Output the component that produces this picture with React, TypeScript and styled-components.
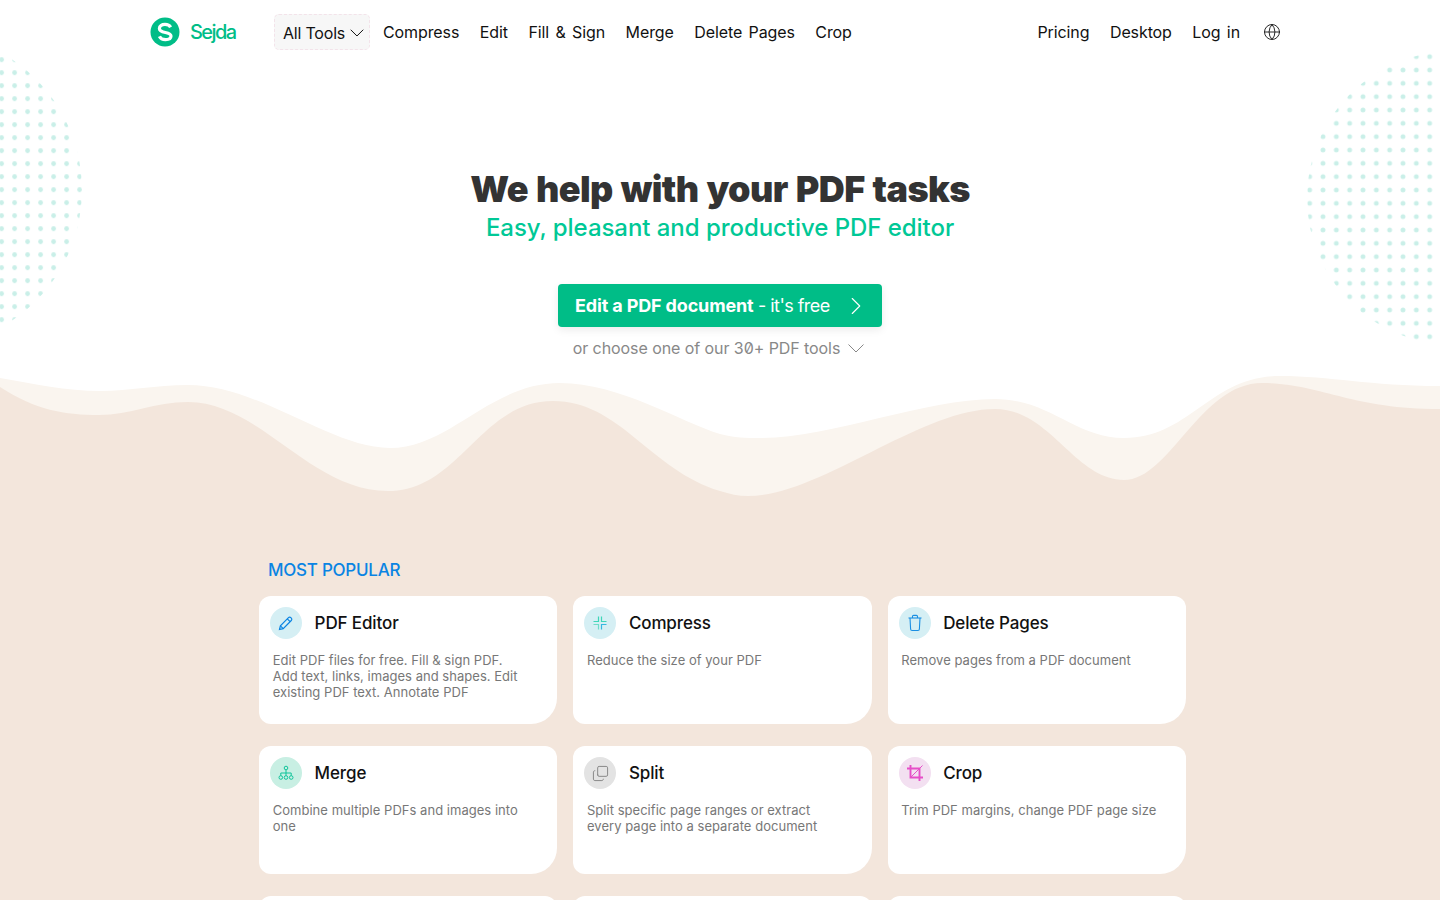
import styled, { createGlobalStyle } from "styled-components"
import { ChevronDown, ChevronRight, Copy, Globe } from "lucide-react"
import type { ReactNode } from "react"

const GlobalStyle = createGlobalStyle`
  html, body {
    margin: 0;
    padding: 0;
    background: #fff;
    overflow: hidden;
  }
  body {
    font-family: Inter, "Liberation Sans", sans-serif;
    color: #111;
  }
`

const Page = styled.div`
  position: relative;
  height: 900px;
  overflow: hidden;
`

const DotField = styled.svg`
  position: absolute;
  top: 0;
  left: 0;
  pointer-events: none;
`

const Nav = styled.nav`
  position: relative;
  display: flex;
  align-items: center;
  height: 64px;
  padding: 0 159px 0 150px;
  font-size: 16px;
  letter-spacing: -0.1px;
  word-spacing: 2px;
`

const Brand = styled.a`
  display: flex;
  align-items: center;
  gap: 10px;
  width: 124px;
  color: #00bd87;
  font-size: 20px;
  font-weight: 500;
  letter-spacing: -1.6px;
`

const NavLinks = styled.div`
  display: flex;
  align-items: center;
  gap: 20.5px;
`

const NavLink = styled.a`
  color: #111;
  white-space: nowrap;
`

const ToolsButton = styled.button`
  display: flex;
  align-items: center;
  justify-content: space-between;
  box-sizing: border-box;
  width: 96px;
  height: 36px;
  margin-right: -7.5px;
  padding: 2px 0 0 8px;
  background: #f7f7f7;
  border: 1px dashed #f3e3ea;
  border-radius: 5px;
  color: #111;
  font: inherit;
  letter-spacing: -0.2px;
  word-spacing: 0;
  white-space: nowrap;
`

const NavRight = styled(NavLinks)`
  margin-left: auto;

  svg {
    margin-left: 2.5px;
  }
`

const Hero = styled.section`
  position: relative;
  display: flex;
  flex-direction: column;
  align-items: center;
  padding: 103px 0 16px;
`

const Title = styled.h1`
  margin: 0;
  color: #333;
  font-size: 36px;
  font-weight: 900;
  line-height: 45px;
  letter-spacing: -0.6px;
  word-spacing: 1.4px;
`

const Subtitle = styled.h2`
  margin: 0;
  color: #00c896;
  font-size: 24px;
  font-weight: 500;
  line-height: 32px;
  letter-spacing: -0.05px;
`

const CallToAction = styled.a`
  display: flex;
  align-items: center;
  justify-content: space-between;
  box-sizing: border-box;
  width: 324px;
  height: 43px;
  margin-top: 40px;
  padding: 0 11px 0 17px;
  background: #00bd87;
  border-radius: 4px;
  box-shadow: 0 3px 8px rgba(0, 0, 0, 0.08);
  color: #fff;
  font-size: 18px;
  letter-spacing: -0.55px;

  strong {
    font-weight: 700;
    letter-spacing: -0.15px;
  }
`

const MoreTools = styled.a`
  display: flex;
  align-items: center;
  gap: 8px;
  margin-top: 9px;
  padding-right: 3px;
  color: #888;
  font-size: 16px;
  line-height: 24px;
  font-feature-settings: "zero";
  letter-spacing: -0.07px;
`

const Wave = styled.svg`
  display: block;
  width: 1440px;
  height: 144px;
`

const Popular = styled.section`
  height: 380px;
  padding: 40px 0 0 259px;
  background: #f3e6dc;
`

const SectionLabel = styled.h3`
  margin: 0 0 16px 9px;
  color: #0a84e3;
  font-size: 17px;
  font-weight: 500;
  line-height: 20px;
  letter-spacing: -0.25px;
`

const CardGrid = styled.div`
  display: grid;
  grid-template-columns: repeat(3, 298.3px);
  grid-auto-rows: 128px;
  column-gap: 16px;
  row-gap: 22px;
`

const Card = styled.a`
  display: block;
  box-sizing: border-box;
  padding: 11px 11px 0 11px;
  background: #fff;
  border-radius: 12px 12px 26px 12px;
`

const CardHead = styled.div`
  display: flex;
  align-items: center;
  gap: 12.6px;
`

const IconCircle = styled.span<{ $bg: string }>`
  display: flex;
  align-items: center;
  justify-content: center;
  flex: none;
  width: 32px;
  height: 32px;
  border-radius: 50%;
  background: ${(p) => p.$bg};
`

const CardTitle = styled.span`
  color: #111;
  font-size: 17px;
  font-weight: 450;
  letter-spacing: -0.12px;
`

const CardText = styled.p`
  max-width: 257px;
  margin: 13px 0 0 2.7px;
  color: #777;
  font-size: 13px;
  line-height: 16px;
  letter-spacing: 0.03px;
`

const Logo = () => (
  <svg width="30" height="30" viewBox="0 0 30 30">
    <circle cx="15" cy="15" r="14.5" fill="#00bd87" />
    <path
      d="M20.6 10.2C19.6 8.3 17.6 7.4 15 7.4c-3.3 0-5.6 1.6-5.6 4.1 0 5.6 11.6 2.4 11.6 7.6 0 2.300-2.400 3.600-5.500 3.600-3 0-5.100-1.100-6.100-3.300"
      fill="none"
      stroke="#fff"
      strokeWidth="3.2"
    />
  </svg>
)

const WideChevron = () => (
  <svg width="16" height="9" viewBox="0 0 16 9" fill="none" stroke="#888" strokeWidth="1">
    <path d="M0.500 0.500L8 8L15.500 0.500" />
  </svg>
)

const PencilIcon = () => (
  <svg width="16" height="16" viewBox="0 0 16 16" fill="none" stroke="#0a84e3" strokeWidth="1.200">
    <path d="M1.500 14.500l.9-3.700 8.100-8.100a1.600 1.600 0 0 1 2.300 0l.5.500a1.600 1.600 0 0 1 0 2.300l-8.100 8.100z" />
    <path d="M9.300 3.900l2.800 2.800M2.400 10.800l2.800 2.800" />
  </svg>
)

const CompressIcon = () => (
  <svg width="16" height="16" viewBox="0 0 16 16" fill="none" strokeWidth="1.2">
    <path d="M6.500 1.500v5h-5" stroke="#3ed6b8" />
    <path d="M9.500 1.500v5h5" stroke="#3ed6b8" />
    <path d="M6.500 14.500v-5h-5" stroke="#6fdcc8" />
    <path d="M9.500 14.500v-5h5" stroke="#35b8e0" />
  </svg>
)

const TrashIcon = () => (
  <svg width="16" height="18" viewBox="0 0 16 18" fill="none" stroke="#1a8fe3" strokeWidth="1.1">
    <path d="M1.500 4h13" />
    <path d="M5.500 4V2.500C5.500 1.800 6 1.400 6.600 1.400h2.800c.6 0 1.100.4 1.100 1.100V4" />
    <path d="M3 4l.6 11c0 .9.6 1.500 1.500 1.500h5.800c.9 0 1.500-.6 1.500-1.500L13 4" />
  </svg>
)

const MergeIcon = () => (
  <svg width="16" height="16" viewBox="0 0 16 16" fill="none" stroke="#0fc49a" strokeWidth="1">
    <circle cx="8" cy="3" r="1.800" />
    <circle cx="2.800" cy="12.500" r="1.800" />
    <circle cx="8" cy="12.500" r="1.800" />
    <circle cx="13.200" cy="12.500" r="1.800" />
    <path d="M8 4.800v5.900M2.800 10.700V8h10.400v2.700" />
  </svg>
)

const CropIcon = () => (
  <svg width="18" height="18" viewBox="0 0 18 18" fill="none" stroke="#e64fc8" strokeWidth="1.900">
    <path d="M1 4.500h12.500V17" />
    <path d="M4.500 1v12.500H17" />
    <path d="M4.500 13.500L16.500 1.500" strokeWidth="1" />
  </svg>
)

interface ToolCardProps {
  icon: ReactNode
  iconBg: string
  title: string
  text: string
}

const ToolCard = ({ icon, iconBg, title, text }: ToolCardProps) => (
  <Card>
    <CardHead>
      <IconCircle $bg={iconBg}>{icon}</IconCircle>
      <CardTitle>{title}</CardTitle>
    </CardHead>
    <CardText>{text}</CardText>
  </Card>
)

const tools: ToolCardProps[] = [
  {
    icon: <PencilIcon />,
    iconBg: "#d5eff4",
    title: "PDF Editor",
    text: "Edit PDF files for free. Fill & sign PDF. Add text, links, images and shapes. Edit existing PDF text. Annotate PDF",
  },
  { icon: <CompressIcon />, iconBg: "#d5eff4", title: "Compress", text: "Reduce the size of your PDF" },
  { icon: <TrashIcon />, iconBg: "#d5eff4", title: "Delete Pages", text: "Remove pages from a PDF document" },
  { icon: <MergeIcon />, iconBg: "#c8efe3", title: "Merge", text: "Combine multiple PDFs and images into one" },
  {
    icon: <Copy size={17} color="#888" strokeWidth={1.4} style={{ transform: "rotate(-90deg)" }} />,
    iconBg: "#e3e3e3",
    title: "Split",
    text: "Split specific page ranges or extract every page into a separate document",
  },
  { icon: <CropIcon />, iconBg: "#f3e0f1", title: "Crop", text: "Trim PDF margins, change PDF page size" },
]

const Dots = () => (
  <DotField width="1440" height="360">
    <defs>
      <pattern id="dots-left" x="-4.900" y="1.200" width="13" height="13" patternUnits="userSpaceOnUse">
        <circle cx="6.500" cy="6.500" r="2.400" fill="#c9efe8" />
      </pattern>
      <pattern id="dots-right" x="1303" y="50" width="13.333" height="13.333" patternUnits="userSpaceOnUse">
        <circle cx="6.667" cy="6.667" r="2.400" fill="#c9efe8" />
      </pattern>
    </defs>
    <circle cx="-75" cy="190" r="157" fill="url(#dots-left)" />
    <circle cx="1454" cy="198" r="147" fill="url(#dots-right)" />
  </DotField>
)

export default function App() {
  return (
    <Page>
      <GlobalStyle />
      <Dots />
      <Nav>
        <Brand>
          <Logo />
          Sejda
        </Brand>
        <NavLinks>
          <ToolsButton>
            All Tools
            <ChevronDown size={24} strokeWidth={1} />
          </ToolsButton>
          <NavLink>Compress</NavLink>
          <NavLink>Edit</NavLink>
          <NavLink>Fill &amp; Sign</NavLink>
          <NavLink>Merge</NavLink>
          <NavLink>Delete Pages</NavLink>
          <NavLink>Crop</NavLink>
        </NavLinks>
        <NavRight>
          <NavLink>Pricing</NavLink>
          <NavLink>Desktop</NavLink>
          <NavLink>Log in</NavLink>
          <Globe size={18} strokeWidth={1.3} color="#222" />
        </NavRight>
      </Nav>
      <Hero>
        <Title>We help with your PDF tasks</Title>
        <Subtitle>Easy, pleasant and productive PDF editor</Subtitle>
        <CallToAction>
          <span>
            <strong>Edit a PDF document</strong> - it's free
          </span>
          <ChevronRight size={30} strokeWidth={0.9} />
        </CallToAction>
        <MoreTools>
          or choose one of our 30+ PDF tools
          <WideChevron />
        </MoreTools>
      </Hero>
      <Wave viewBox="0 376 1440 144">
        <path
          fill="#faf5ef"
          d="M0,378 C35,384 65,391 101,391 C130,391 155,385 188,385 C260,385 330,448 390,448 C450,448 490,383 560,383 C620,383 680,422 720,434 C735,438 745,438 761,438 C830,438 925,399 995,399 C1050,399 1075,438 1124,438 C1190,438 1210,376 1280,376 C1330,376 1370,386 1440,386 V520 H0 Z"
        />
        <path
          fill="#f3e6dc"
          d="M0,387 C35,410 65,415 99,415 C130,415 155,402 188,402 C260,402 310,491 388,491 C460,491 480,401 553,401 C620,401 650,470 720,491 C730,494 738,496 748,496 C820,496 920,409 995,409 C1050,409 1075,480 1124,480 C1170,480 1200,383 1262,383 C1320,383 1350,409 1440,409 V520 H0 Z"
        />
      </Wave>
      <Popular>
        <SectionLabel>MOST POPULAR</SectionLabel>
        <CardGrid>
          {tools.map((tool) => (
            <ToolCard key={tool.title} {...tool} />
          ))}
          <Card />
          <Card />
          <Card />
        </CardGrid>
      </Popular>
    </Page>
  )
}
